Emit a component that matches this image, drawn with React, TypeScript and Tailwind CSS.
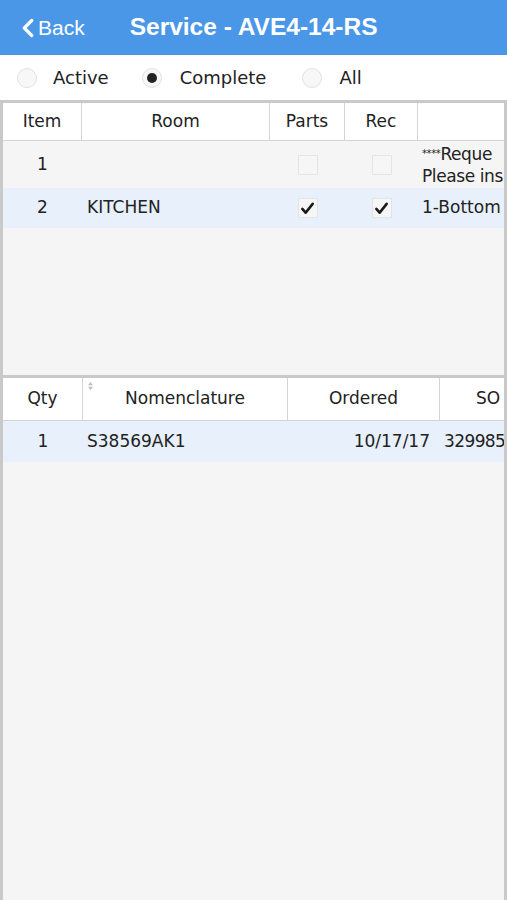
import { ChevronLeft } from "lucide-react";

const font = { fontFamily: '"DejaVu Sans", Verdana, sans-serif' };

function Radio({ on }: { on?: boolean }) {
  return (
    <span className="flex h-[20px] w-[20px] items-center justify-center rounded-full border border-[#e2e2e2] bg-[#f7f7f7]">
      {on && <span className="h-[10px] w-[10px] rounded-full bg-[#222]" />}
    </span>
  );
}

function Box({ checked }: { checked?: boolean }) {
  return (
    <span className="flex h-[20px] w-[20px] items-center justify-center border border-[#e4e4e4] bg-[#f6f6f6]">
      {checked && (
        <svg viewBox="0 0 16 16" className="h-[15px] w-[15px]">
          <path d="M2.5 8.5 L6 12.5 L13.5 3" fill="none" stroke="#1a1a1a" strokeWidth="2.8" strokeLinecap="round" strokeLinejoin="round" />
        </svg>
      )}
    </span>
  );
}

export default function App() {
  return (
    <div className="flex h-[900px] w-[507px] flex-col overflow-hidden bg-white text-[#222]" style={font}>
      {/* Nav bar */}
      <div className="flex h-[55px] shrink-0 items-center bg-[#4a97e8] text-white" style={{ fontFamily: '"Liberation Sans", Arial, sans-serif' }}>
        <div className="flex items-center pl-[13px]">
          <ChevronLeft className="h-[30px] w-[30px]" strokeWidth={2.6} />
          <span className="ml-[-5px] text-[21px]">Back</span>
        </div>
        <span className="ml-[45px] text-[24.5px] font-bold">Service - AVE4-14-RS</span>
      </div>

      {/* Filter */}
      <div className="flex h-[45px] shrink-0 items-center pl-[17px] text-[18px]">
        <Radio />
        <span className="ml-[16px]">Active</span>
        <span className="ml-[33px]"><Radio on /></span>
        <span className="ml-[18px]">Complete</span>
        <span className="ml-[36px]"><Radio /></span>
        <span className="ml-[17px]">All</span>
      </div>

      {/* Items table */}
      <div className="flex h-[278px] shrink-0 flex-col border-[3px] border-[#c9c9c9] bg-[#f5f5f5] text-[17px]">
        <div className="flex h-[38px] shrink-0 bg-white">
          <div className="flex w-[79px] items-center justify-center border-r border-b border-[#d4d4d4]">Item</div>
          <div className="flex w-[188px] items-center justify-center border-r border-b border-[#d4d4d4]">Room</div>
          <div className="flex w-[75px] items-center justify-center border-r border-b border-[#d4d4d4]">Parts</div>
          <div className="flex w-[73px] items-center justify-center border-r border-b border-[#d4d4d4]">Rec</div>
          <div className="flex-1 border-b border-[#d4d4d4]" />
        </div>
        <div className="flex h-[47px] shrink-0 items-center">
          <div className="w-[79px] text-center">1</div>
          <div className="w-[188px]" />
          <div className="flex w-[75px] justify-center"><Box /></div>
          <div className="flex w-[73px] justify-center"><Box /></div>
          <div className="flex-1 overflow-hidden whitespace-nowrap pl-[4px] leading-[22px] tracking-[-0.4px]">
            <div><span className="align-top text-[10px]">****</span>Reque</div>
            <div>Please ins</div>
          </div>
        </div>
        <div className="flex h-[40px] shrink-0 items-center bg-[#e8f0fb]">
          <div className="w-[79px] text-center">2</div>
          <div className="w-[188px] pl-[5px]">KITCHEN</div>
          <div className="flex w-[75px] justify-center"><Box checked /></div>
          <div className="flex w-[73px] justify-center"><Box checked /></div>
          <div className="flex-1 overflow-hidden whitespace-nowrap pl-[4px]">1-Bottom</div>
        </div>
      </div>

      {/* Parts table */}
      <div className="flex flex-1 flex-col border-x-[3px] border-[#c9c9c9] bg-[#f5f5f5] text-[17px]">
        <div className="flex h-[43px] shrink-0 bg-white">
          <div className="flex w-[80px] items-center justify-center border-r border-b border-[#d4d4d4]">Qty</div>
          <div className="relative flex w-[205px] items-center justify-center border-r border-b border-[#d4d4d4]">
            <svg viewBox="0 0 6 10" className="absolute left-[5px] top-[4px] h-[8px] w-[5px]">
              <path d="M3 0 L6 4 L0 4 Z M3 10 L6 6 L0 6 Z" fill="#bbb" />
            </svg>
            Nomenclature
          </div>
          <div className="flex w-[152px] items-center justify-center border-r border-b border-[#d4d4d4]">Ordered</div>
          <div className="flex flex-1 items-center overflow-hidden whitespace-nowrap border-b border-[#d4d4d4] pl-[36px]">SO</div>
        </div>
        <div className="flex h-[41px] shrink-0 items-center bg-[#e8f0fb]">
          <div className="w-[80px] text-center">1</div>
          <div className="w-[205px] pl-[4px]">S38569AK1</div>
          <div className="w-[152px] pr-[10px] text-right">10/17/17</div>
          <div className="flex-1 overflow-hidden whitespace-nowrap pl-[4px] tracking-[-0.6px]">329985</div>
        </div>
      </div>
    </div>
  );
}
